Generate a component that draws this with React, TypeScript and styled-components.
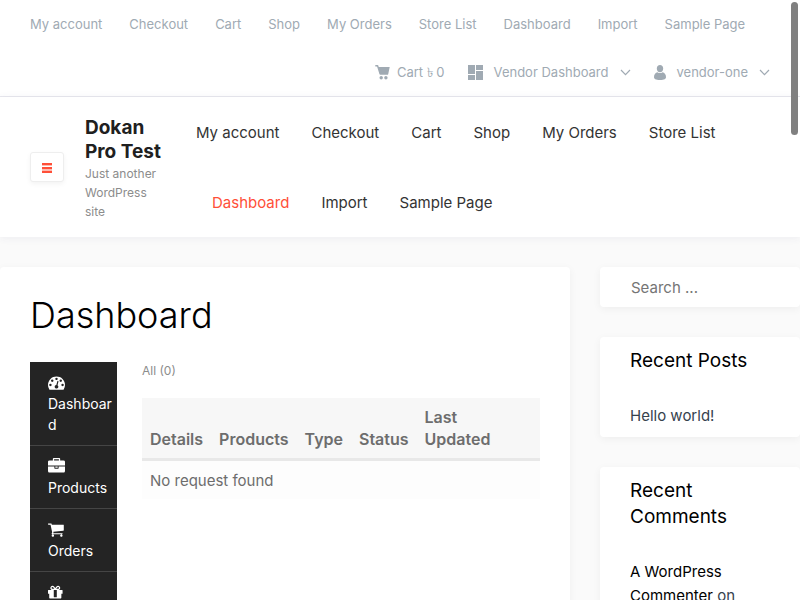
import React from "react";
import styled, { createGlobalStyle } from "styled-components";

const GlobalStyle = createGlobalStyle`
  *, *::before, *::after { box-sizing: border-box; }
  html, body { margin: 0; padding: 0; }
  body {
    background: #fafafa;
    color: #6d6d6d;
    font-family: Inter, "Liberation Sans", sans-serif;
    font-size: 15px;
    line-height: 24px;
  }
  h1, h2, p, ul { margin: 0; padding: 0; }
  ul { list-style: none; }
  a { color: inherit; text-decoration: none; }
`;

const Page = styled.div`
  position: relative;
  height: 100vh;
  overflow: hidden;
`;

const ScrollThumb = styled.div`
  position: absolute;
  top: 2px;
  right: 2px;
  width: 7px;
  height: 133px;
  border-radius: 4px;
  background: #808080;
  z-index: 5;
`;

const TopBar = styled.div`
  background: #fff;
  border-bottom: 1px solid #e8e8ee;
  padding: 0 30px;
  color: #a0aab3;
  font-size: 13px;
`;

const TopMenu = styled.ul`
  display: flex;
  align-items: center;
  gap: 27px;
  height: 48px;
  white-space: nowrap;
`;

const AccountMenu = styled(TopMenu)`
  justify-content: flex-end;
  gap: 23px;
`;

const AccountLink = styled.a<{ $gap: number }>`
  display: flex;
  align-items: center;
  gap: ${(p) => p.$gap}px;
`;

const Header = styled.header`
  display: flex;
  align-items: center;
  height: 140px;
  padding: 0 30px;
  background: #fff;
  box-shadow: 0 1px 8px rgba(60, 60, 120, 0.07);
`;

const MenuToggle = styled.button`
  display: flex;
  align-items: center;
  justify-content: center;
  flex: none;
  width: 34px;
  height: 30px;
  margin-right: 21px;
  padding: 2px 0 0;
  border: 1px solid #eee;
  border-radius: 3px;
  background: #fff;
  color: #ff4f38;
  box-shadow: 0 2px 5px rgba(0, 0, 0, 0.05);
`;

const Brand = styled.div`
  flex: none;
  width: 81px;
  margin-right: 30px;
  padding-top: 3px;
`;

const BrandName = styled.a`
  display: block;
  color: #202020;
  font-size: 19px;
  font-weight: 700;
  line-height: 24px;
`;

const Tagline = styled.p`
  color: #8c8c8c;
  font-size: 12px;
  line-height: 19px;
`;

const MainMenu = styled.ul`
  display: flex;
  flex: 1;
  flex-wrap: wrap;
  padding-top: 1px;
  line-height: 70px;
  color: #333;
  white-space: nowrap;
`;

const MainMenuItem = styled.li<{ $active?: boolean }>`
  padding: 0 16px;
  color: ${(p) => (p.$active ? "#ff4f38" : "inherit")};
  &:first-child { padding-left: 0; }
`;

const Content = styled.div`
  display: flex;
  align-items: flex-start;
  gap: 30px;
  padding-top: 30px;
`;

const Card = styled.section`
  border-radius: 4px;
  background: #fff;
  box-shadow: 0 2px 8px rgba(0, 0, 0, 0.05);
`;

const MainCard = styled(Card)`
  flex: 1;
  min-width: 0;
  min-height: 400px;
  padding: 24px 30px 30px;
`;

const Title = styled.h1`
  margin-bottom: 23px;
  color: #000;
  font-size: 36px;
  font-weight: 300;
  line-height: 48px;
`;

const Dashboard = styled.div`
  display: flex;
  align-items: flex-start;
  gap: 25px;
`;

const VendorMenu = styled.ul`
  flex: none;
  width: 87px;
  background: #242424;
  color: #fff;
  font-size: 14px;
  line-height: 21px;
`;

const VendorItem = styled.li`
  padding: 10px 4px 10px 18px;
  border-bottom: 1px solid #454545;
  word-break: break-all;
`;

const VendorIcon = styled.svg`
  display: block;
  width: 17px;
  height: 17px;
  margin: 2px 0;
`;

const Requests = styled.div`
  flex: 1;
  min-width: 0;
`;

const Filter = styled.p`
  margin-bottom: 18px;
  color: #8c8c8c;
  font-size: 12px;
  line-height: 18px;
`;

const Table = styled.table`
  width: 100%;
  border-collapse: collapse;
  line-height: 22px;
  text-align: left;
`;

const HeadCell = styled.th`
  padding: 8px;
  border-bottom: 3px solid #e8e8e8;
  background: #f7f7f7;
  font-size: 16px;
  font-weight: 600;
  vertical-align: bottom;
  &:last-child { width: 126px; padding-right: 40px; }
`;

const Cell = styled.td`
  padding: 9px 8px 7px;
  background: #fdfdfd;
`;

const Sidebar = styled.aside`
  display: grid;
  flex: none;
  width: 25%;
  gap: 30px;
`;

const SearchInput = styled.input`
  display: block;
  width: 100%;
  height: 40px;
  padding: 0 31px;
  border: 0;
  border-radius: 4px;
  background: transparent;
  font: inherit;
  &::placeholder { color: #757575; opacity: 1; }
`;

const Widget = styled(Card)`
  padding: 11px 30px 9px;
`;

const WidgetTitle = styled.h2`
  margin-bottom: 30px;
  color: #000;
  font-size: 19px;
  font-weight: 400;
  line-height: 26px;
`;

const WidgetText = styled.p`
  color: #36424e;
`;

const Author = styled.a`
  color: #000;
`;

const pages = ["My account", "Checkout", "Cart", "Shop", "My Orders", "Store List", "Dashboard", "Import", "Sample Page"];

const vendorItems = [
  {
    label: "Dashboard",
    path: "M384 1152q0-53-37.5-90.5t-90.5-37.5-90.5 37.5-37.5 90.5 37.5 90.5 90.5 37.5 90.5-37.5 37.5-90.5zm192-448q0-53-37.5-90.5t-90.5-37.5-90.5 37.5-37.5 90.5 37.5 90.5 90.5 37.5 90.5-37.5 37.5-90.5zm428 481l101-382q6-26-7.5-48.5t-38.5-29.5-48 6.5-30 39.5l-101 382q-60 5-107 43.5t-63 98.5q-20 77 20 146t117 89 146-20 89-117q16-60-6-117t-72-91zm660-33q0-53-37.5-90.5t-90.5-37.5-90.5 37.5-37.5 90.5 37.5 90.5 90.5 37.5 90.5-37.5 37.5-90.5zm-640-640q0-53-37.5-90.5t-90.5-37.5-90.5 37.5-37.5 90.5 37.5 90.5 90.5 37.5 90.5-37.5 37.5-90.5zm448 192q0-53-37.5-90.5t-90.5-37.5-90.5 37.5-37.5 90.5 37.5 90.5 90.5 37.5 90.5-37.5 37.5-90.5zm320 448q0 261-141 483-19 29-54 29h-1402q-35 0-54-29-141-221-141-483 0-182 71-348t191-286 286-191 348-71 348 71 286 191 191 286 71 348z",
  },
  {
    label: "Products",
    path: "M640 256h512v-128h-512v128zm1152 640v480q0 66-47 113t-113 47h-1472q-66 0-113-47t-47-113v-480h672v160q0 26 19 45t45 19h320q26 0 45-19t19-45v-160h672zm-768 0v128h-256v-128h256zm768-480v384h-1792v-384q0-66 47-113t113-47h352v-160q0-40 28-68t68-28h576q40 0 68 28t28 68v160h352q66 0 113 47t47 113z",
  },
  {
    label: "Orders",
    path: "M640 1536q0 52-38 90t-90 38-90-38-38-90 38-90 90-38 90 38 38 90zm896 0q0 52-38 90t-90 38-90-38-38-90 38-90 90-38 90 38 38 90zm128-1088v512q0 24-16.5 42.5t-40.5 21.5l-1044 122q13 60 13 70 0 16-24 64h920q26 0 45 19t19 45-19 45-45 19h-1024q-26 0-45-19t-19-45q0-11 8-31.5t16-36 21.5-40 15.5-29.5l-177-823h-204q-26 0-45-19t-19-45 19-45 45-19h256q16 0 28.5 6.5t19.5 15.5 13 24.5 8 26 5.5 29.5 4.5 26h1201q26 0 45 19t19 45z",
  },
  {
    label: "Coupons",
    path: "M928 1356v-716h-320v716q0 25 18 38.5t46 13.5h192q28 0 46-13.5t18-38.5zm-456-844h195l-126-161q-26-31-69-31-40 0-68 28t-28 68 28 68 68 28zm688-96q0-40-28-68t-68-28q-43 0-69 31l-125 161h194q40 0 68-28t28-68zm376 256v320q0 14-9 23t-23 9h-96v416q0 40-28 68t-68 28h-1088q-40 0-68-28t-28-68v-416h-96q-14 0-23-9t-9-23v-320q0-14 9-23t23-9h440q-93 0-158.5-65.5t-65.5-158.5 65.5-158.5 158.5-65.5q107 0 168 77l128 165 128-165q61-77 168-77 93 0 158.5 65.5t65.5 158.5-65.5 158.5-158.5 65.5h440q14 0 23 9t9 23z",
  },
];

const Chevron = () => (
  <svg width="11" height="7" viewBox="0 0 11 7" fill="none" stroke="currentColor" strokeWidth="1.2" aria-hidden="true">
    <path d="M1 1l4.5 4.6L10 1" />
  </svg>
);

export default function App() {
  return (
    <Page>
      <GlobalStyle />
      <ScrollThumb />
      <TopBar>
        <nav aria-label="Top">
          <TopMenu>
            {pages.map((page) => (
              <li key={page}><a href="#">{page}</a></li>
            ))}
          </TopMenu>
        </nav>
        <AccountMenu>
          <li>
            <AccountLink href="#" $gap={7}>
              <svg width="15" height="15" viewBox="0 0 15 15" fill="currentColor" aria-hidden="true">
                <path d="M.3 0h2.200c.5 0 .8.300.9.700L3.700 2H14.700l-1.500 7.200c-.1.400-.4.600-.8.600H5.300c-.5 0-.8-.3-.9-.7L2.400 2.400c-.1-.4-.3-.7-.7-.8L.3 1.500z" />
                <circle cx="6.200" cy="12.800" r="1.700" />
                <circle cx="10.900" cy="12.800" r="1.700" />
              </svg>
              Cart ৳ 0
            </AccountLink>
          </li>
          <li>
            <AccountLink href="#" $gap={11}>
              <svg width="15" height="15" viewBox="0 0 15 15" fill="currentColor" aria-hidden="true">
                <path d="M0 0h7v9H0zM8 0h7v5H8zM0 10h7v5H0zM8 6h7v9H8z" />
              </svg>
              Vendor Dashboard
              <Chevron />
            </AccountLink>
          </li>
          <li>
            <AccountLink href="#" $gap={11}>
              <svg width="12" height="15" viewBox="0 0 12 15" fill="currentColor" aria-hidden="true">
                <path d="M6 0c1.900 0 3.200 1.400 3.200 3.400S7.900 7.300 6 7.300 2.800 5.400 2.800 3.400 4.100 0 6 0zM3.500 7.200c1.500 1.200 3.500 1.200 5 0C10.700 7.700 12 9.600 12 12c0 2-1.500 3-6 3s-6-1-6-3c0-2.400 1.300-4.300 3.500-4.800z" />
              </svg>
              vendor-one
              <Chevron />
            </AccountLink>
          </li>
        </AccountMenu>
      </TopBar>
      <Header>
        <MenuToggle type="button" aria-label="Open menu">
          <svg width="10" height="10" viewBox="0 0 10 10" fill="currentColor" aria-hidden="true">
            <path d="M0 0h10v2H0zM0 4h10v2H0zM0 8h10v2H0z" />
            <path d="M0 2h10v1H0zM0 6h10v2H0z" opacity=".4" />
          </svg>
        </MenuToggle>
        <Brand>
          <BrandName href="#">Dokan Pro Test</BrandName>
          <Tagline>Just another WordPress site</Tagline>
        </Brand>
        <MainMenu>
          {pages.map((page) => (
            <MainMenuItem key={page} $active={page === "Dashboard"}><a href="#">{page}</a></MainMenuItem>
          ))}
        </MainMenu>
      </Header>
      <Content>
        <MainCard as="main">
          <Title>Dashboard</Title>
          <Dashboard>
            <VendorMenu>
              {vendorItems.map((item) => (
                <VendorItem key={item.label}>
                  <a href="#">
                    <VendorIcon viewBox="0 0 1792 1792" fill="currentColor" aria-hidden="true">
                      <path d={item.path} />
                    </VendorIcon>
                    {item.label}
                  </a>
                </VendorItem>
              ))}
            </VendorMenu>
            <Requests>
              <Filter><a href="#">All (0)</a></Filter>
              <Table>
                <thead>
                  <tr>
                    <HeadCell>Details</HeadCell>
                    <HeadCell>Products</HeadCell>
                    <HeadCell>Type</HeadCell>
                    <HeadCell>Status</HeadCell>
                    <HeadCell>Last Updated</HeadCell>
                  </tr>
                </thead>
                <tbody>
                  <tr><Cell colSpan={5}>No request found</Cell></tr>
                </tbody>
              </Table>
            </Requests>
          </Dashboard>
        </MainCard>
        <Sidebar>
          <Card>
            <SearchInput type="search" aria-label="Search" placeholder="Search ..." />
          </Card>
          <Widget>
            <WidgetTitle>Recent Posts</WidgetTitle>
            <WidgetText><a href="#">Hello world!</a></WidgetText>
          </Widget>
          <Widget>
            <WidgetTitle>Recent Comments</WidgetTitle>
            <WidgetText><Author href="#">A WordPress Commenter</Author> on <a href="#">Hello world!</a></WidgetText>
          </Widget>
        </Sidebar>
      </Content>
    </Page>
  );
}
